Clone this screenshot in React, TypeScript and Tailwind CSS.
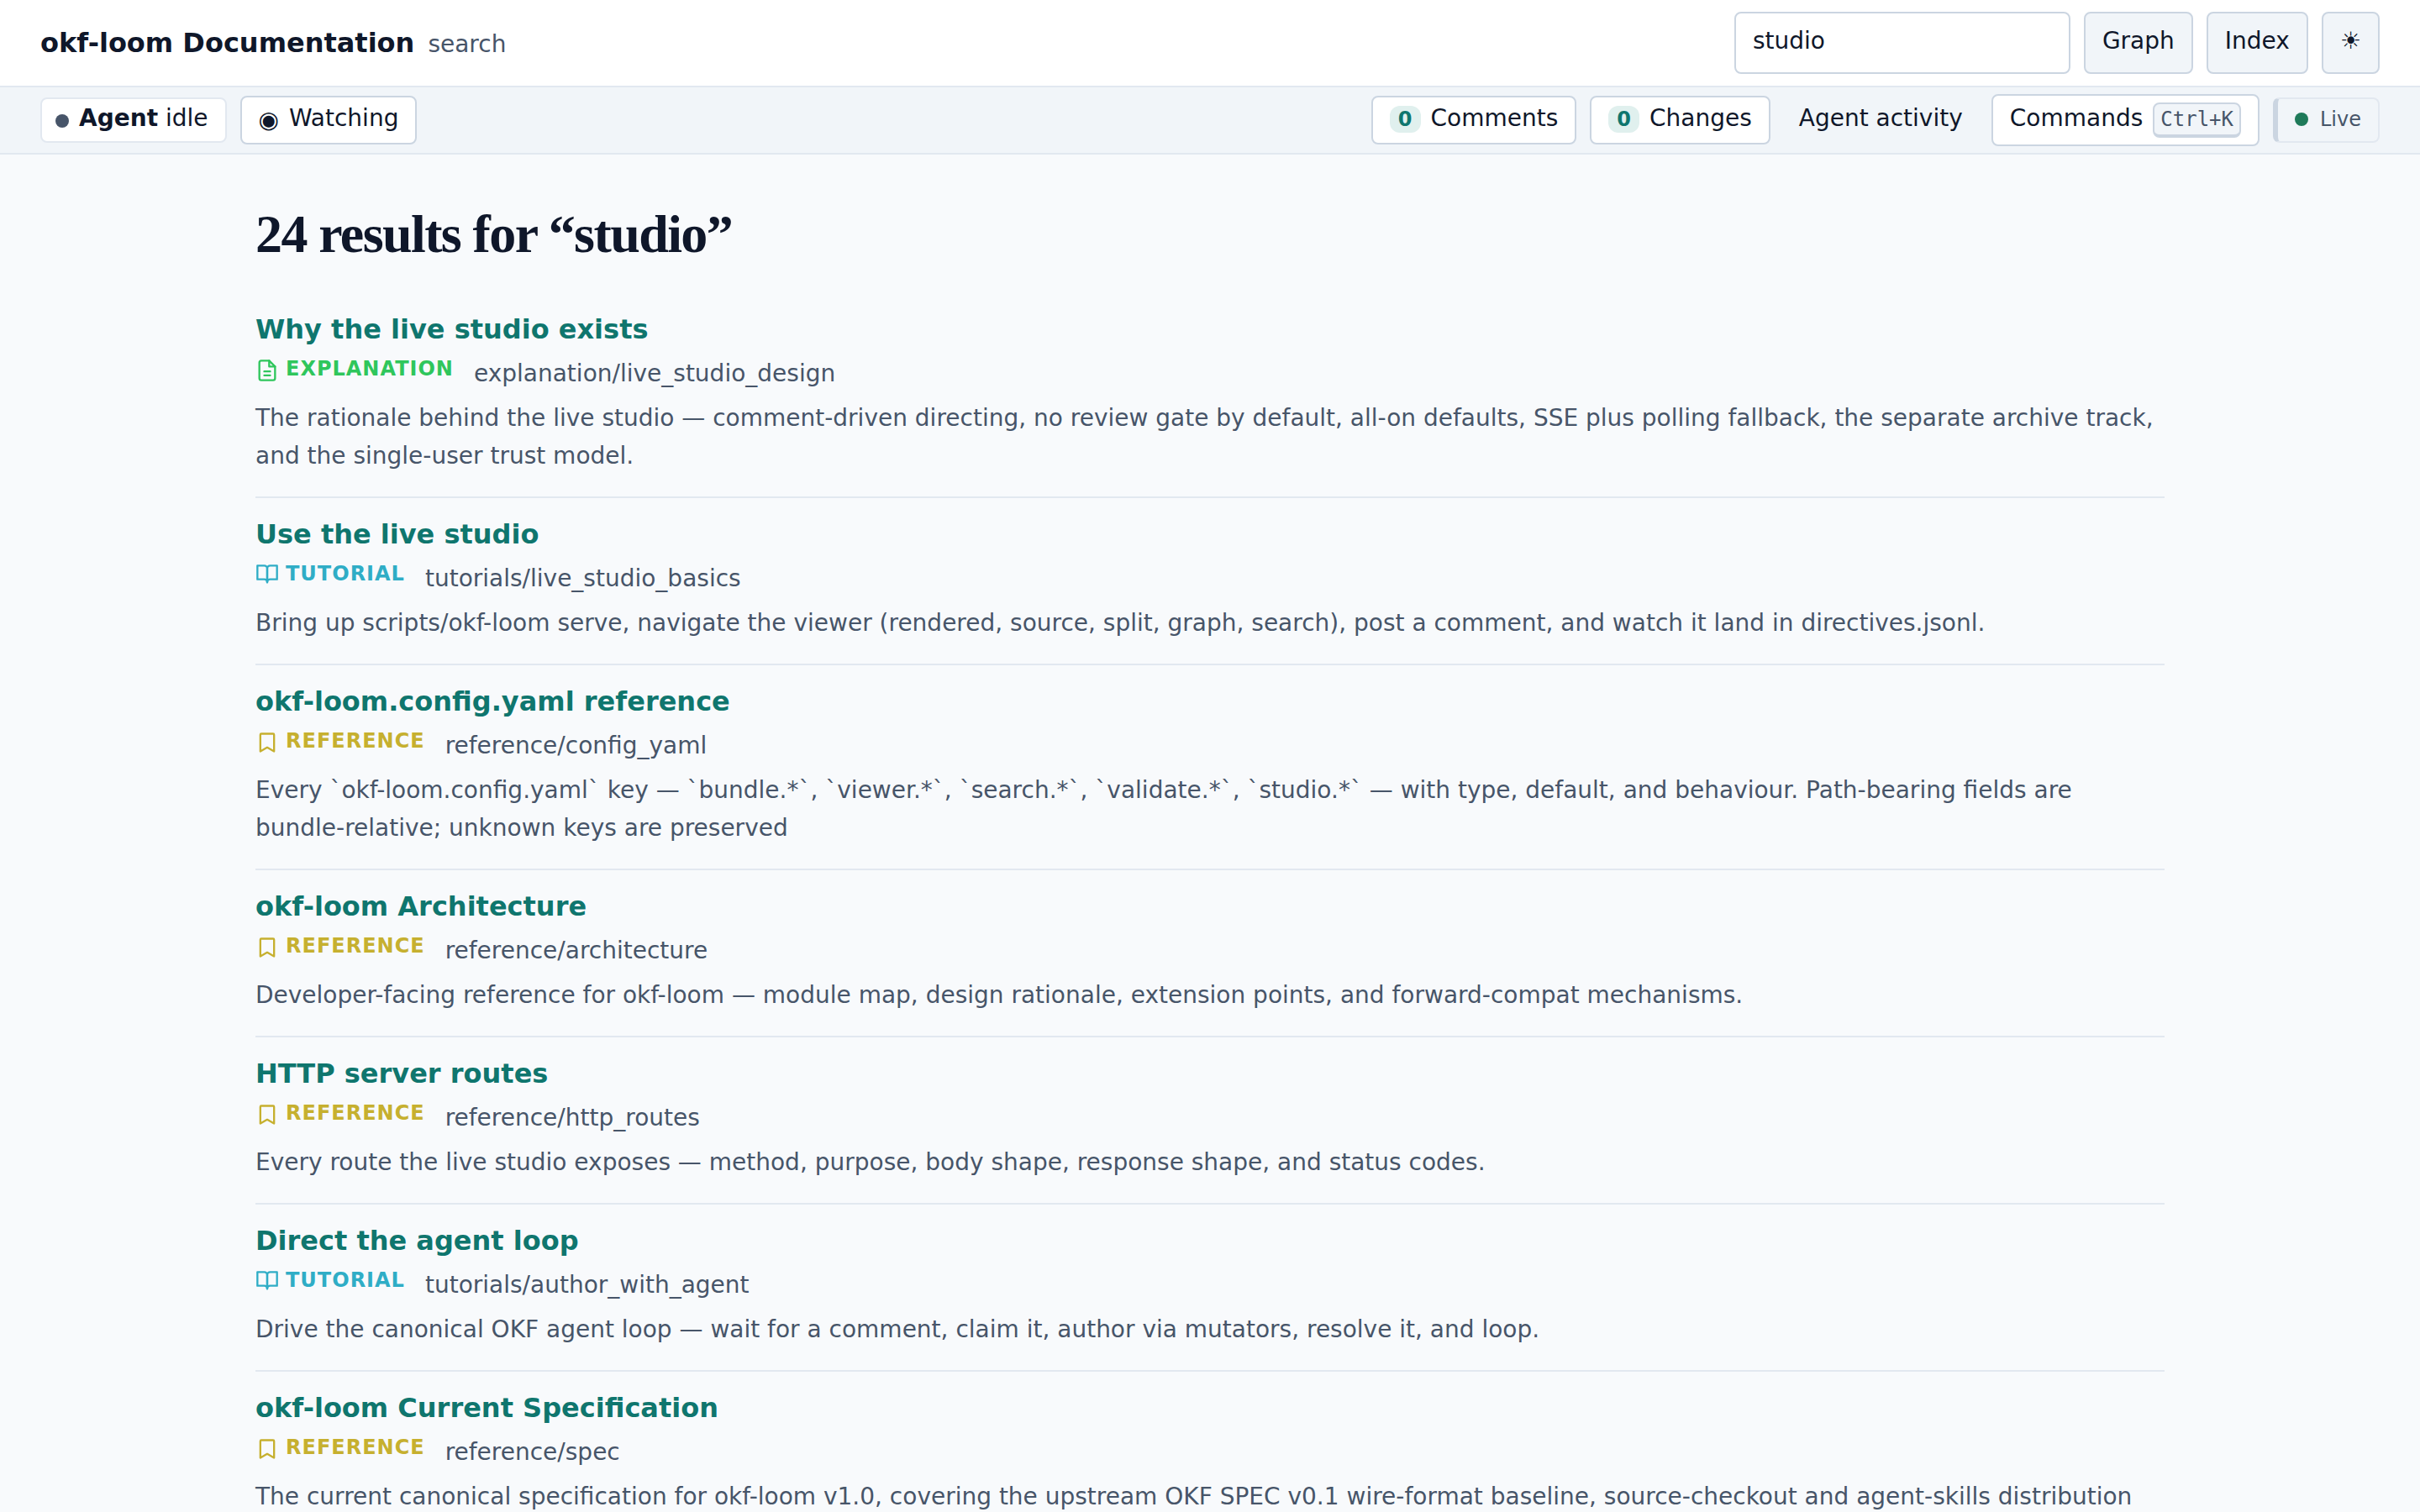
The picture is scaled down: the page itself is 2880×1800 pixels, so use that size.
import { useState } from "react";

type Kind = "explanation" | "tutorial" | "reference";

type Result = { title: string; kind: Kind; path: string; text: string };

const results: Result[] = [
  {
    title: "Why the live studio exists",
    kind: "explanation",
    path: "explanation/live_studio_design",
    text: "The rationale behind the live studio — comment-driven directing, no review gate by default, all-on defaults, SSE plus polling fallback, the separate archive track, and the single-user trust model.",
  },
  {
    title: "Use the live studio",
    kind: "tutorial",
    path: "tutorials/live_studio_basics",
    text: "Bring up scripts/okf-loom serve, navigate the viewer (rendered, source, split, graph, search), post a comment, and watch it land in directives.jsonl.",
  },
  {
    title: "okf-loom.config.yaml reference",
    kind: "reference",
    path: "reference/config_yaml",
    text: "Every `okf-loom.config.yaml` key — `bundle.*`, `viewer.*`, `search.*`, `validate.*`, `studio.*` — with type, default, and behaviour. Path-bearing fields are bundle-relative; unknown keys are preserved",
  },
  {
    title: "okf-loom Architecture",
    kind: "reference",
    path: "reference/architecture",
    text: "Developer-facing reference for okf-loom — module map, design rationale, extension points, and forward-compat mechanisms.",
  },
  {
    title: "HTTP server routes",
    kind: "reference",
    path: "reference/http_routes",
    text: "Every route the live studio exposes — method, purpose, body shape, response shape, and status codes.",
  },
  {
    title: "Direct the agent loop",
    kind: "tutorial",
    path: "tutorials/author_with_agent",
    text: "Drive the canonical OKF agent loop — wait for a comment, claim it, author via mutators, resolve it, and loop.",
  },
  {
    title: "okf-loom Current Specification",
    kind: "reference",
    path: "reference/spec",
    text: "The current canonical specification for okf-loom v1.0, covering the upstream OKF SPEC v0.1 wire-format baseline, source-checkout and agent-skills distribution",
  },
];

const kindColor: Record<Kind, string> = {
  explanation: "text-[#2fc65c]",
  tutorial: "text-[#2fadc6]",
  reference: "text-[#c6b02f]",
};

function KindIcon({ kind }: { kind: Kind }) {
  return (
    <svg
      className="size-7"
      viewBox="0 0 24 24"
      fill="none"
      stroke="currentColor"
      strokeWidth="2"
      strokeLinecap="round"
      strokeLinejoin="round"
      aria-hidden="true"
    >
      {kind === "explanation" && (
        <>
          <path d="M14 2H6a2 2 0 0 0-2 2v16a2 2 0 0 0 2 2h12a2 2 0 0 0 2-2V8z" />
          <path d="M14 2v6h6M9 13h6M9 17h6" />
        </>
      )}
      {kind === "tutorial" && (
        <>
          <path d="M2 2h7a3 3 0 0 1 3 3v14a3 3 0 0 0-3-3H2z" />
          <path d="M22 2h-7a3 3 0 0 0-3 3v14a3 3 0 0 1 3-3h7z" />
        </>
      )}
      {kind === "reference" && <path d="M19 21l-7-4-7 4V4a1 1 0 0 1 1-1h12a1 1 0 0 1 1 1z" />}
    </svg>
  );
}

function ResultItem({ result }: { result: Result }) {
  return (
    <li className="border-b-2 border-[#e2e8f0] pt-[18px] pb-[26px]">
      <h2 className="text-[32px] leading-[51px] font-bold">
        <a href={"#" + result.path} className="text-[#0f766e]">
          {result.title}
        </a>
      </h2>
      <div className="mt-1 flex items-start gap-6">
        <span className={"flex items-start gap-2 " + kindColor[result.kind]}>
          <span className="pt-[5px]">
            <KindIcon kind={result.kind} />
          </span>
          <span className="text-[24px] leading-[34px] font-bold tracking-[1px] uppercase">{result.kind}</span>
        </span>
        <span>{result.path}</span>
      </div>
      <p className="mt-2">{result.text}</p>
    </li>
  );
}

function Count({ value }: { value: number }) {
  return (
    <span className="mt-1 rounded-xl bg-[#e0f0ee] px-[10px] text-[24px] leading-8 font-bold text-[#0f766e]">
      {value}
    </span>
  );
}

const barButton =
  "flex h-[58px] items-center gap-3 rounded-lg border-2 border-[#cbd5e1] bg-white px-5 pb-[6px]";
const navButton =
  "rounded-lg border-2 border-[#cbd5e1] bg-[#f1f5f9] px-5 pt-[10px] pb-[15px]";

export default function App() {
  const [query, setQuery] = useState("studio");
  return (
    <div className="h-screen overflow-hidden bg-[#f8fafc] font-['DejaVu_Sans',sans-serif] text-[28px] leading-[45px] text-[#0f172a]">
      <header className="flex items-center justify-between border-b-2 border-[#e2e8f0] bg-white px-12 py-[14px]">
        <div className="flex items-baseline gap-4">
          <a href="#home" className="text-[32px] leading-[51px] font-bold">
            okf-loom Documentation
          </a>
          <span className="text-[#475569]">search</span>
        </div>
        <nav className="flex gap-4">
          <input
            type="search"
            aria-label="Search"
            value={query}
            onChange={(e) => setQuery(e.target.value)}
            className="w-[400px] rounded-lg border-2 border-[#cbd5e1] bg-white px-5 pt-[10px] pb-[15px]"
          />
          <a href="#graph" className={navButton}>Graph</a>
          <a href="#index" className={navButton}>Index</a>
          <button type="button" aria-label="Toggle theme" className={navButton}>☀</button>
        </nav>
      </header>

      <div className="flex h-20 items-center justify-between border-b-2 border-[#e2e8f0] bg-[#f1f5f9] px-12">
        <div className="flex items-center gap-4">
          <div className="flex h-[54px] items-center gap-3 rounded-lg border-2 border-[#e2e8f0] bg-white pr-5 pl-4">
            <span className="mt-[2px] size-4 rounded-full bg-[#475569]" />
            <span className="pb-[6px]">
              <strong>Agent</strong> idle
            </span>
          </div>
          <button type="button" className={barButton}>
            <span className="pt-1">◉</span>
            Watching
          </button>
        </div>
        <div className="flex items-center gap-4">
          <button type="button" className={barButton}>
            <Count value={0} />
            Comments
          </button>
          <button type="button" className={barButton}>
            <Count value={0} />
            Changes
          </button>
          <button type="button" className="px-[18px] pb-[6px]">Agent activity</button>
          <button
            type="button"
            className="flex h-[62px] items-center gap-3 rounded-lg border-2 border-[#cbd5e1] bg-white px-5"
          >
            <span className="pb-[6px]">Commands</span>
            <kbd className="rounded-lg border-2 border-b-4 border-[#cbd5e1] bg-[#f1f5f9] px-[7px] font-['DejaVu_Sans_Mono',monospace] text-[24px] leading-9 text-[#475569]">
              Ctrl+K
            </kbd>
          </button>
          <div className="flex h-[54px] items-center gap-[14px] rounded-lg border-2 border-l-6 border-[#e2e8f0] border-l-[#cbd5e1] px-5 pb-[2px] text-[24px] leading-9 text-[#475569]">
            <span className="size-4 rounded-full bg-[#1f7a5a]" />
            Live
          </div>
        </div>
      </div>

      <main className="mx-auto max-w-[2368px] px-12 pt-14">
        <h1 className="font-['Liberation_Serif',serif] text-[64px] leading-[77px] font-bold tracking-tight">
          24 results for “studio”
        </h1>
        <ul className="mt-8 text-[#475569]">
          {results.map((r) => (
            <ResultItem key={r.path} result={r} />
          ))}
        </ul>
      </main>
    </div>
  );
}
